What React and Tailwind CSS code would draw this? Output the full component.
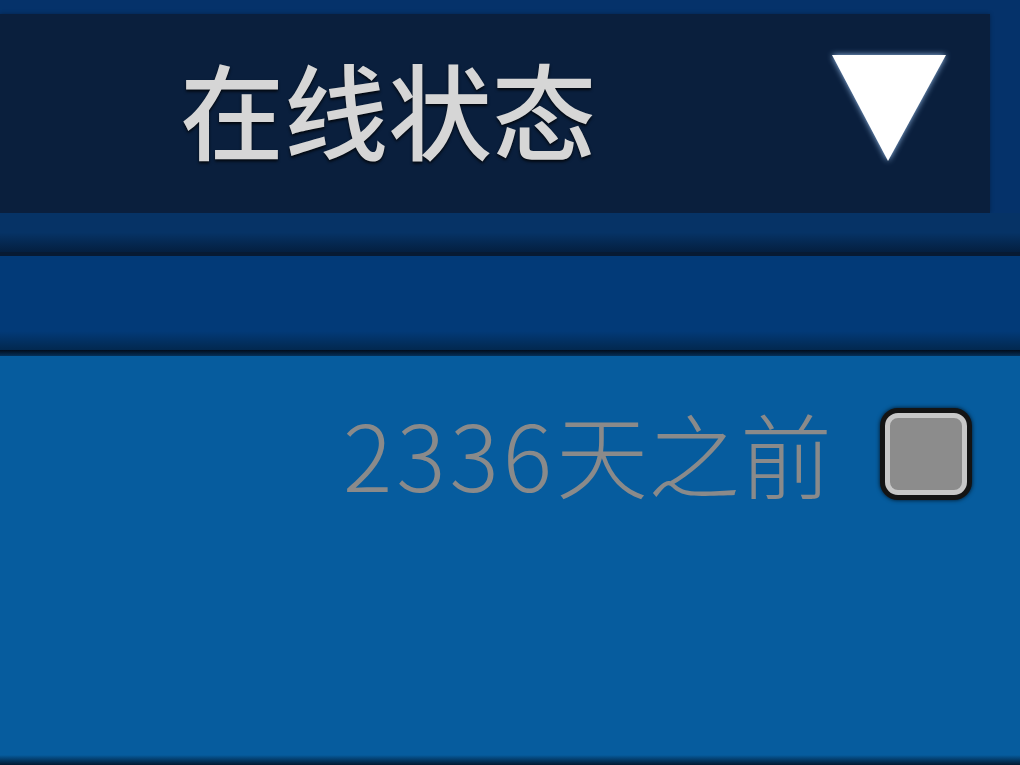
export default function App() {
  return (
    <div className="w-[1020px] h-[765px] overflow-hidden flex flex-col bg-[#05326a] font-['Noto_Sans_CJK_SC','Noto_Sans',sans-serif]">
      {/* header dropdown */}
      <div className="pt-[14px] pr-[30px]">
        <div className="h-[199px] bg-[#0a1f3d] flex items-center shadow-[0_0_4px_rgba(0,0,0,0.3)]">
          <span className="ml-[180px] text-[104px] leading-none font-medium text-[#d6d6d6] [text-shadow:0_2px_3px_rgba(0,0,0,0.8)] -mt-[12px]">
            在线状态
          </span>
          <svg
            className="ml-auto mr-[42px] -mt-[12px] drop-shadow-[0_0_3px_rgba(170,210,255,0.9)]"
            width="118"
            height="110"
            viewBox="0 0 118 110"
          >
            <polygon points="2,2 116,2 58,108" fill="#ffffff" />
          </svg>
        </div>
      </div>

      {/* separator band */}
      <div className="h-[39px] bg-gradient-to-b from-[#063366] via-[#063366] to-[#041f40]" />
      <div className="h-[4px] bg-[#071a33]" />
      <div className="h-[94px] bg-[#023a78] bg-gradient-to-b from-[#023a78] from-80% to-[#02284f]" />
      <div className="h-[6px] bg-gradient-to-b from-[#020d1c] to-[#04305a]" />

      {/* list row */}
      <div className="flex-1 bg-[#065c9e] flex flex-col">
        <div className="flex items-center justify-end h-[200px] pr-[48px] -mt-[2px]">
          <span className="text-[92px] leading-none font-light text-[#8a8a8a] -mt-[4px]">
            <span className="tracking-[4px]">2336</span>天之前
          </span>
          <div className="ml-[48px] w-[92px] h-[92px] rounded-[18px] bg-[#141414] p-[5px] shadow-[0_0_4px_rgba(0,0,0,0.8)]">
            <div className="w-full h-full rounded-[13px] bg-[#8c8c8c] border-[5px] border-[#c8c8c8]" />
          </div>
        </div>
        <div className="flex-1" />
        <div className="h-[10px] bg-gradient-to-b from-[#065c9e] to-[#021a33]" />
      </div>
    </div>
  )
}
